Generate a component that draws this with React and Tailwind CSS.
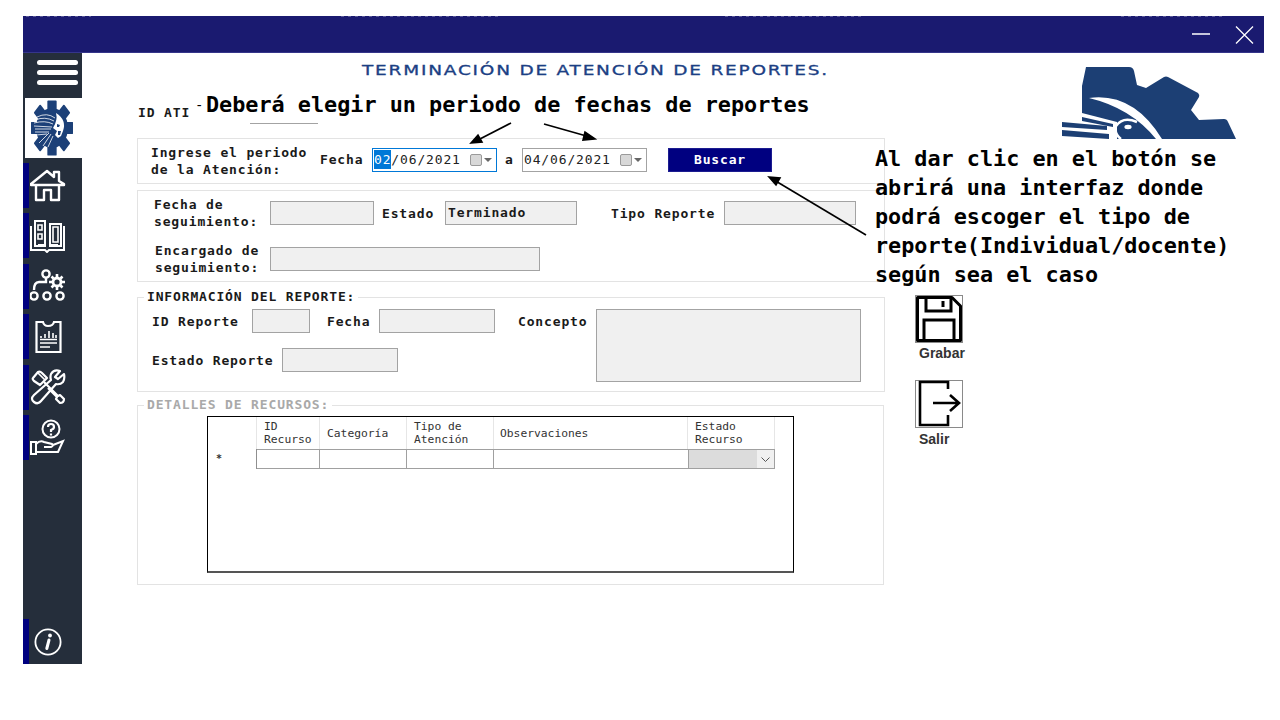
import React from 'react';

const mono = { fontFamily: '"DejaVu Sans Mono", monospace' };

// Iconos del menu lateral, dibujados a mano
function HomeIcon() {
  return (
    <svg width="36" height="34" viewBox="0 0 36 34" fill="none" stroke="white" strokeWidth="2.4" strokeLinejoin="round">
      <path d="M1 15 L17 2 L24 8 V3 H29 V12 L34 15 V16 H1 Z" />
      <path d="M6 16 V31 H14 V21 H21 V31 H29 V16" />
    </svg>
  );
}

function BookIcon() {
  return (
    <svg width="36" height="34" viewBox="0 0 36 34" fill="none" stroke="white" strokeWidth="2">
      <path d="M5 2 H15 V27 H5 Z M20 5 H31 V27 H20 Z" />
      <path d="M8 6 H12 V11 H8 Z M8 15 H12 V20 H8 Z M23 8 H28 V23 H23 Z" strokeWidth="1.6" />
      <path d="M1 7 V31 H15 L17 33 L19 31 H34 V7" />
      <path d="M8 26 H15 M20 26 H28" />
    </svg>
  );
}

function FlowIcon() {
  return (
    <svg width="36" height="34" viewBox="0 0 36 34" fill="none" stroke="white" strokeWidth="2.4">
      <circle cx="16" cy="5" r="3.6" />
      <path d="M16 9 V13 H9 Q4 13 4 21" />
      <circle cx="4" cy="27" r="3.6" />
      <circle cx="17" cy="27" r="3.6" />
      <circle cx="30" cy="27" r="3.6" />
      <circle cx="27" cy="13" r="4" strokeWidth="2.8" />
      <path d="M27 5 V8 M27 18 V21 M19 13 H22 M32 13 H35 M21.5 7.5 L23.5 9.5 M30.5 16.5 L32.5 18.5 M32.5 7.5 L30.5 9.5 M23.5 16.5 L21.5 18.5" strokeWidth="2.6" />
    </svg>
  );
}

function ReportIcon() {
  return (
    <svg width="27" height="34" viewBox="0 0 27 34" fill="none" stroke="white" strokeWidth="2.2">
      <path d="M1.5 2 H8 Q9 6 13 6 Q18 6 19 2 H25.5 V32 H1.5 Z" />
      <path d="M6 16 V18 M10 14 V18 M14 11 V18 M18 13 V18 M21 15 V18" strokeWidth="1.6" />
      <path d="M5 19.5 H22 M5 23 H22 M5 27 H15" strokeWidth="1.6" />
    </svg>
  );
}

function ToolsIcon() {
  return (
    <svg width="36" height="36" viewBox="0 0 36 36" fill="none" stroke="white" strokeWidth="2.2" strokeLinejoin="round">
      <path d="M3 9 L8 3 Q10 2 12 4 L17 9 L10 16 L4 12 Q2 10 3 9 Z" />
      <path d="M14 13 L19 18 L28 27 L30 26 L34 30 Q34 34 30 34 L26 30 L27 28 L18 19" />
      <path d="M8 4 L15 11" strokeWidth="1.6" />
      <path d="M34 5 L28 10 L25 8 L30 2 Q24 0 21 5 Q20 8 21 11 L4 26 Q0 30 4 33 Q8 36 11 32 L26 15 Q30 16 33 13 Q35 10 34 5 Z" />
    </svg>
  );
}

function HandIcon() {
  return (
    <svg width="36" height="36" viewBox="0 0 36 36" fill="none" stroke="white" strokeWidth="2">
      <circle cx="21" cy="10" r="8.5" />
      <path d="M18 8 Q18 5 21 5 Q24 5 24 8 Q24 10 21 11 V13 M21 14.5 V16.5" strokeWidth="2.2" />
      <path d="M1 23 H6 V35 H1 Z" />
      <path d="M6 25 Q10 21 14 23 L22 25 Q24 27 21 28 H14 M23 26 L33 22 L28 33 H6" />
    </svg>
  );
}

function GearLogoSmall() {
  const teeth = [0, 45, 90, 135, 180, 225, 270, 315];
  return (
    <svg width="42" height="56" viewBox="0 0 42 56">
      <g fill="#1c4078">
        <ellipse cx="21" cy="28" rx="16" ry="20" />
        {teeth.map((deg) => (
          <rect key={deg} x="16" y="1" width="10" height="9" rx="1" transform={`translate(21 28) scale(0.93 1.2) rotate(${deg}) translate(-21 -24)`} />
        ))}
      </g>
      <path fill="white" d="M25 13 Q36 20 32 31 L30 36 L27 38 L24 35 L26 31 L22 28 Q27 20 25 13 Z" />
      <g fill="none" stroke="white" strokeWidth="0.8">
        <path d="M6 17 Q16 12 24 18 M4 20 Q14 16 23 21 M3 23 Q14 20 22 24 M3 26 L21 27 M4 29 L20 29 M4 32 L18 32 M5 35 L16 34 M8 43 L18 33 M12 46 L20 34 M17 47 L22 36" />
      </g>
      <path fill="#1c4078" d="M26 24 L29 25 L28 27 L26 27 Z M27 31 L30 31 L29 35 L27 35 Z" />
    </svg>
  );
}

function TecLogo() {
  return (
    <svg width="176" height="73" viewBox="0 0 176 73" className="block">
      <path fill="#1c3f74" d="M25 1 H68 Q72 1 73 5 L76 19 L85 22 L103 11 Q105 10 107 11 L137 27 Q139 29 138 31 L130 44 L138 54 L163 53 Q166 53 167 56 L175 73 H21 V20 Z" />
      <path fill="white" d="M28 32 Q72 26 101 73 H95 Q70 42 28 32 Z" />
      <path fill="white" d="M0 47 H21 L56 56 V73 H0 Z" />
      <path fill="#1c3f74" d="M21 51 L52 58 L52 61 L21 55 Z M1 56 L46 60 L46 64 L1 61 Z M1 64 L48 68 L48 73 L1 70 Z" />
      <path fill="none" stroke="white" strokeWidth="2.5" d="M76 56 Q62 50 55 60 Q53 68 60 73" />
      <ellipse cx="67" cy="61" rx="3.6" ry="2.2" fill="white" />
    </svg>
  );
}

function SaveIcon() {
  return (
    <svg width="48" height="48" viewBox="0 0 48 48" fill="none" className="block">
      <rect x="0.5" y="0.5" width="47" height="47" stroke="#8a8a8a" />
      <path d="M2.5 2.5 H37 L45.5 11 V45.5 H2.5 Z" stroke="black" strokeWidth="3" strokeLinejoin="round" />
      <path d="M11 3 V16 H36 V3 M9 45 V25 H39 V45" stroke="black" strokeWidth="3" />
      <path d="M28 6 V12" stroke="black" strokeWidth="3" />
    </svg>
  );
}

function ExitIcon() {
  return (
    <svg width="48" height="48" viewBox="0 0 48 48" fill="none" className="block">
      <rect x="0.5" y="0.5" width="47" height="47" stroke="#8a8a8a" />
      <path d="M33 9 V2 H5 V45 H33 V35" stroke="black" strokeWidth="2.6" />
      <path d="M18 23 H43 M35 15 L44 23 L35 31" stroke="black" strokeWidth="2.6" />
    </svg>
  );
}

function InfoIcon() {
  return (
    <svg width="28" height="28" viewBox="0 0 28 28" fill="none" stroke="white">
      <circle cx="14" cy="14" r="12.6" strokeWidth="1.8" />
      <path d="M15 12 L12.8 20.5" strokeWidth="3" strokeLinecap="round" />
      <circle cx="16" cy="7.5" r="1.9" fill="white" stroke="none" />
    </svg>
  );
}

function NavItem({ children }) {
  return (
    <div className="h-[45px] flex items-center">
      <div className="w-[6px] h-full bg-[#00007f]" />
      <div className="w-[36px] ml-[1px] flex justify-center">{children}</div>
    </div>
  );
}

function CalIcon() {
  return (
    <span className="flex items-center ml-auto mr-[4px]">
      <span className="w-[12px] h-[12px] bg-[#d8d8d8] border border-[#9a9a9a] rounded-[2px]" />
      <span className="ml-[2px] w-0 h-0 border-x-[4px] border-x-transparent border-t-[4px] border-t-[#666]" />
    </span>
  );
}

function Field({ className = '', children }) {
  return <div className={`h-[24px] bg-[#f0f0f0] border border-[#a3a3a3] flex items-center pl-[2px] ${className}`}>{children}</div>;
}

function Label({ className = '', children }) {
  return <div className={`font-bold text-[13px] leading-[17px] tracking-[0.85px] text-[#1a1a1a] shrink-0 ${className}`}>{children}</div>;
}

const headers = [
  { text: ['ID', 'Recurso'] },
  { text: ['Categoría'] },
  { text: ['Tipo de', 'Atención'] },
  { text: ['Observaciones'] },
  { text: ['Estado', 'Recurso'] },
];

export default function App() {
  return (
    <div className="relative w-[1280px] h-[720px] bg-white overflow-hidden pt-4 pl-[23px]" style={mono}>
      <div className="w-[1241px] h-[648px] flex flex-col">
        {/* Barra de titulo */}
        <div className="h-[37px] bg-[#1a1a70] border-b border-[#35358a] flex justify-end shrink-0 relative">
          <svg width="1241" height="2" className="absolute left-0 top-0" fill="none" stroke="#5a5a98" strokeDasharray="3 4">
            <path d="M3 0.5 H68 M318 0.5 H478 M702 0.5 H838 M1098 0.5 H1202" />
          </svg>
          <svg width="72" height="36" viewBox="0 0 72 36" fill="none" stroke="white" strokeWidth="1.3">
            <path d="M0 18 H18 M44 10.5 L61 27.5 M61 10.5 L44 27.5" />
          </svg>
        </div>

        <div className="flex flex-1">
          {/* Menu lateral */}
          <div className="w-[59px] bg-[#252e3b] flex flex-col shrink-0">
            <div className="h-[45px] flex flex-col items-end justify-center gap-[5px] pr-[4px] pb-[7px]">
              <div className="w-[41px] h-[5px] rounded-full bg-white" />
              <div className="w-[41px] h-[5px] rounded-full bg-white" />
              <div className="w-[41px] h-[5px] rounded-full bg-white" />
            </div>
            <div className="h-[60px] ml-[2px] bg-white flex items-center justify-center pr-[3px]">
              <GearLogoSmall />
            </div>
            <div className="flex flex-col gap-[5.4px] mt-[5px]">
              <NavItem><HomeIcon /></NavItem>
              <NavItem><BookIcon /></NavItem>
              <NavItem><FlowIcon /></NavItem>
              <NavItem><ReportIcon /></NavItem>
              <NavItem><ToolsIcon /></NavItem>
              <NavItem><HandIcon /></NavItem>
            </div>
            <div className="mt-auto">
              <NavItem><InfoIcon /></NavItem>
            </div>
          </div>

          {/* Contenido */}
          <div className="flex-1 flex pl-[55px]">
            <div className="w-[748px] shrink-0 pt-[9px]">
              <div className="h-[16px] pl-[225px]">
                <div className="origin-left scale-x-[1.37] text-[13.5px] leading-[16px] tracking-[1.3px] text-[#1c3f84] [-webkit-text-stroke:0.3px_#1c3f84] whitespace-nowrap" style={{ fontFamily: '"DejaVu Sans", sans-serif' }}>
                  TERMINACIÓN DE ATENCIÓN DE REPORTES.
                </div>
              </div>

              <div className="mt-[26px] h-[20px] flex items-start">
                <Label className="pl-[1px] w-[113px]">ID ATI</Label>
                <div className="w-[68px] h-[20px] border-b border-[#a3a3a3]" />
              </div>

              <div className="mt-[14px] h-[46px] border border-[#e3e3e3] flex items-center pl-[13px]">
                <Label className="w-[169px]">Ingrese el periodo<br />de la Atención:</Label>
                <Label className="w-[52px] mb-[3px]">Fecha</Label>
                <div className="w-[125px] h-[24px] mb-[3px] border border-[#0078d7] flex items-center pl-[1px] text-[13px] tracking-[0.85px] text-[#222]">
                  <span className="bg-[#0078d7] text-white">02</span>/06/2021<CalIcon />
                </div>
                <Label className="w-[25px] pl-[8px] mb-[3px]">a</Label>
                <div className="w-[125px] h-[24px] mb-[3px] border border-[#a3a3a3] flex items-center pl-[1px] text-[13px] tracking-[0.85px] text-[#222]">
                  04/06/2021<CalIcon />
                </div>
                <button className="ml-[21px] w-[104px] h-[24px] mb-[3px] bg-[#000080] text-white font-bold text-[13px] tracking-[0.85px] border border-[#1c1c90]">Buscar</button>
              </div>

              <div className="mt-[6px] h-[92px] border border-[#e3e3e3] pt-[5px]">
                <div className="flex items-center h-[34px]">
                  <Label className="pl-[16px] w-[132px]">Fecha de<br />seguimiento:</Label>
                  <Field className="w-[104px]" />
                  <Label className="w-[71px] pl-[8px]">Estado</Label>
                  <Field className="w-[132px] font-bold text-[13px] tracking-[0.85px] text-[#1a1a1a]">Terminado</Field>
                  <Label className="w-[147px] pl-[34px]">Tipo Reporte</Label>
                  <Field className="w-[132px]" />
                </div>
                <div className="flex items-center h-[34px] mt-[12px]">
                  <Label className="pl-[17px] w-[132px]">Encargado de<br />seguimiento:</Label>
                  <Field className="w-[270px]" />
                </div>
              </div>

              <fieldset className="mt-[8px] h-[102px] border border-[#e3e3e3] w-full min-w-0">
                <legend className="ml-[6px] px-[3px] font-bold text-[13px] leading-[14px] tracking-[0.85px] text-[#1a1a1a]">INFORMACIÓN DEL REPORTE:</legend>
                <div className="flex items-start pt-[5px]">
                  <div className="flex flex-col gap-[15px] w-[458px]">
                    <div className="flex items-center">
                      <Label className="pl-[14px] w-[114px]">ID Reporte</Label>
                      <Field className="w-[58px]" />
                      <Label className="w-[69px] pl-[17px]">Fecha</Label>
                      <Field className="w-[116px]" />
                      <Label className="w-[101px] pl-[23px]">Concepto</Label>
                    </div>
                    <div className="flex items-center">
                      <Label className="pl-[14px] w-[144px]">Estado Reporte</Label>
                      <Field className="w-[116px]" />
                    </div>
                  </div>
                  <Field className="w-[265px] !h-[73px]" />
                </div>
              </fieldset>

              <fieldset className="mt-[6px] h-[187px] border border-[#e3e3e3] w-[747px] min-w-0">
                <legend className="ml-[6px] px-[3px] font-bold text-[13px] leading-[14px] tracking-[0.85px] text-[#a9a9a9]">DETALLES DE RECURSOS:</legend>
                <div className="ml-[69px] mt-[4px] w-[587px] h-[157px] border border-black border-b-2 border-b-[#555]">
                  <div className="grid grid-cols-[49px_63px_87px_87px_194px_87px] h-[32px] text-[11.3px] leading-[13px] text-[#333]">
                    <div className="border-r border-[#e6e6e6]" />
                    {headers.map((h, i) => (
                      <div key={i} className={`flex flex-col justify-center border-r border-[#e6e6e6] ${i === 3 ? 'pl-[6px]' : 'pl-[7px]'}`}>
                        {h.text.map((t) => <span key={t}>{t}</span>)}
                      </div>
                    ))}
                  </div>
                  <div className="grid grid-cols-[49px_63px_87px_87px_194px_87px] h-[20px]">
                    <div className="border-r border-[#8f8f8f] flex items-center pl-[8px]">
                      <span className="font-bold text-[10px] leading-none text-[#333]">*</span>
                    </div>
                    <div className="border-t border-r border-b border-[#a0a0a0]" />
                    <div className="border-t border-r border-b border-[#a0a0a0]" />
                    <div className="border-t border-r border-b border-[#a0a0a0]" />
                    <div className="border-t border-b border-[#a0a0a0]" />
                    <div className="bg-[#dcdcdc] border border-[#a0a0a0] flex justify-end">
                      <div className="w-[17px] bg-[#f0f0f0] flex items-center justify-center">
                        <svg width="9" height="5" viewBox="0 0 9 5" fill="none" stroke="#555"><path d="M0.5 0.5 L4.5 4.5 L8.5 0.5" /></svg>
                      </div>
                    </div>
                  </div>
                </div>
              </fieldset>
            </div>

            {/* Logo y botones */}
            <div className="flex flex-col pl-[30px]">
              <div className="ml-[146px] mt-[13px]"><TecLogo /></div>
              <button className="mt-[156px] flex flex-col items-start">
                <SaveIcon />
                <span className="ml-[4px] mt-[3px] font-bold text-[14px] leading-[14px] text-[#333]" style={{ fontFamily: '"Liberation Sans", sans-serif' }}>Grabar</span>
              </button>
              <button className="mt-[20px] flex flex-col items-start">
                <ExitIcon />
                <span className="ml-[4px] mt-[4px] font-bold text-[14px] leading-[14px] text-[#333]" style={{ fontFamily: '"Liberation Sans", sans-serif' }}>Salir</span>
              </button>
            </div>
          </div>
        </div>
      </div>

      {/* Anotaciones sobre la captura */}
      <div className="absolute left-[193px] top-[92px] h-[26px] bg-white pl-[2px] font-bold text-[21.8px] leading-[26px] text-black whitespace-nowrap flex items-center">
        <span className="text-[14px] font-normal w-[11px]">-</span><span>Deberá elegir un periodo de fechas de reportes</span>
      </div>
      <div className="absolute left-[875px] top-[144px] font-bold text-[21.8px] leading-[29px] text-black whitespace-nowrap">
        Al dar clic en el botón se<br />
        abrirá una interfaz donde<br />
        podrá escoger el tipo de<br />
        reporte(Individual/docente)<br />
        según sea el caso
      </div>
      <svg width="1280" height="720" className="absolute left-0 top-0 pointer-events-none" fill="none" stroke="black" strokeWidth="1.6">
        <path d="M511 123 L476 141" />
        <path d="M471 143 L482 142 L478 135 Z" fill="black" />
        <path d="M544 124 L590 137" />
        <path d="M595 139 L585 132 L583 140 Z" fill="black" />
        <path d="M866 235 L774 180" />
        <path d="M769 177 L780 178 L776 185 Z" fill="black" />
      </svg>
    </div>
  );
}
